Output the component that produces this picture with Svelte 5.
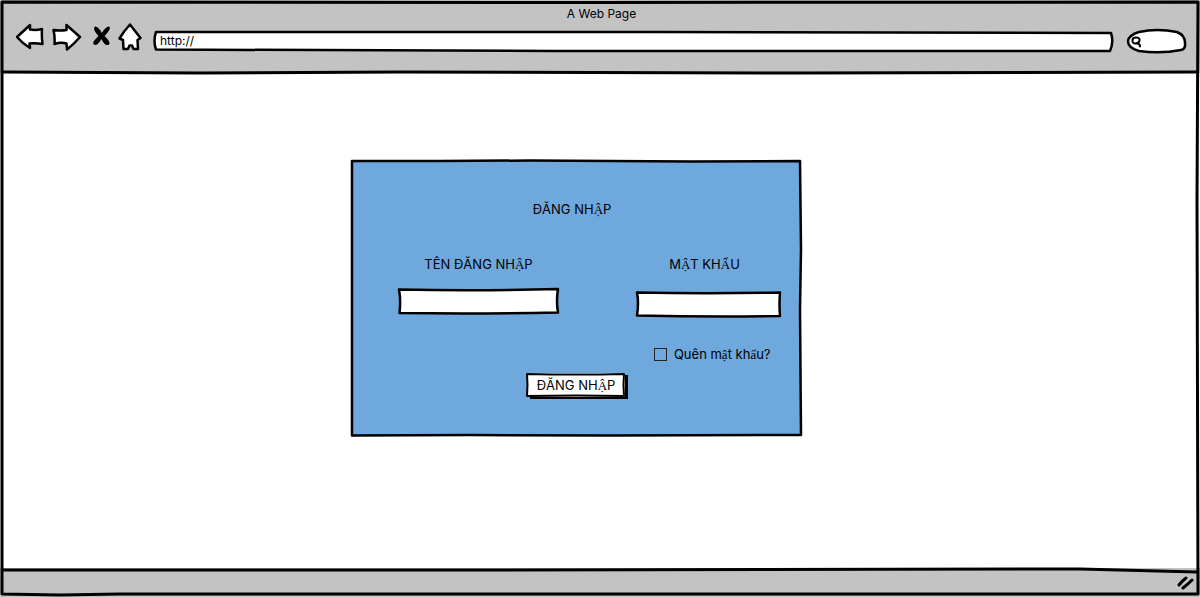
<script>
  let address = $state('http://');
  let query = $state('');
  let username = $state('');
  let password = $state('');
  let forgot = $state(false);

  // Vietnamese letters with stacked accents are set in the serif face
  const split = (text) => text.split(/([ẬậẨẩẤấ])/).filter(Boolean);
  const stacked = (part) => /^[ẬậẨẩẤấ]$/.test(part);
</script>

{#snippet outline(w, h, d, fill)}
  <svg class="outline" viewBox="0 0 {w} {h}" preserveAspectRatio="none" aria-hidden="true">
    <path {d} {fill} />
  </svg>
{/snippet}

{#snippet words(text)}{#each split(text) as part}{#if stacked(part)}<span class="serif">{part}</span>{:else}{part}{/if}{/each}{/snippet}

<div class="window">
  <header>
    <h1>A Web Page</h1>
    <div class="toolbar">
      <button class="tool back" type="button" aria-label="Back">
        <svg width="28" height="28" viewBox="0 0 28 28"><path d="M1 14 L14 2 L14 6.500 Q20 7.500 26 6 Q25.500 13 26.500 21 Q20 20 13.500 20.500 L14 25 Q7 21 1 14Z" /></svg>
      </button>
      <button class="tool forward" type="button" aria-label="Forward">
        <svg width="30" height="28" viewBox="0 0 30 28"><path d="M1.500 7 Q8 8 14.500 7 L14.500 2 L28 14 Q22 21 15 26.500 L14.500 20.500 Q9 19 2.500 21 Q3 13 1.500 7Z" /></svg>
      </button>
      <button class="tool stop" type="button" aria-label="Stop">
        <svg width="18" height="28" viewBox="0 0 18 28"><path class="solid" d="M3 3.500 Q6 3 10 10 Q13 4 17 3.500 Q20 5 12.500 13 Q19 19 17 21.500 Q13 24 9.500 16 Q6 22 3 22 Q-2 21 6.500 13 Q0 6 3 3.500Z" /></svg>
      </button>
      <button class="tool home" type="button" aria-label="Home">
        <svg width="24" height="28" viewBox="0 0 24 28"><path d="M12 1.500 L22.500 15 L19.500 17 L20 26 H15.500 L14 22.500 H11.500 L10 26 L5.500 26 L5 17 L1.500 15.500 Q6 8 12 1.500Z" /></svg>
      </button>
      <label class="address">
        {@render outline(958, 22, 'M2 2 Q200 1.500 500 2 Q700 2 956 3 Q959 12 955 21 Q700 21 400 21 L2 19.500 Q-1 11 2 2Z', '#fff')}
        <input type="text" aria-label="Address" bind:value={address} />
      </label>
      <label class="search">
        {@render outline(60, 26, 'M12 4 Q30 0 50 4 Q58 7 58 15 Q59 21 54 22 Q34 26 12 23 Q1 20 1 13 Q2 7 12 4Z', '#fff')}
        <svg class="lens" width="12" height="14" viewBox="0 0 12 14"><path d="M7 9 Q2.500 10.500 1.500 7.500 Q1 3.500 5 3.500 Q9 3.500 8.500 6.500 Q8 9 4.500 9.500 M6 9.500 Q9 9.500 9 12.500" /></svg>
        <input type="search" aria-label="Search" bind:value={query} />
      </label>
    </div>
    {@render outline(1200, 73, 'M3 72 L200 73 L400 72 L800 73 L1197 72', 'none')}
  </header>

  <main>
    <form class="login" onsubmit={(event) => event.preventDefault()}>
      {@render outline(451, 278, 'M1 1 L90 1 L180 .5 L340 1.500 L449 1 L450 90 L449 150 L450 276 L260 276.500 L120 276 L1 276.500 L1 160 L1 80Z', '#6fa8dc')}
      <h2>{@render words('ĐĂNG NHẬP')}</h2>
      <div class="fields">
        <div class="field name">
          <label for="username">{@render words('TÊN ĐĂNG NHẬP')}</label>
          <div class="box">
            {@render outline(162, 26, 'M1 1.500 Q80 3 160 1 Q158 13 160 24.500 Q80 26 1.500 25 Q3 12 1 1.500Z', '#fff')}
            <input id="username" type="text" bind:value={username} />
          </div>
        </div>
        <div class="field pass">
          <label for="password">{@render words('MẬT KHẨU')}</label>
          <div class="box">
            {@render outline(146, 26, 'M1 1.500 Q70 3 144 1.500 Q143 13 144 25 Q75 26 1 24.500 Q3 12 1 1.500Z', '#fff')}
            <input id="password" type="password" bind:value={password} />
          </div>
        </div>
      </div>
      <label class="forgot">
        <input type="checkbox" bind:checked={forgot} />
        <span>{@render words('Quên mật khẩu?')}</span>
      </label>
      <button class="submit" type="submit">
        {@render outline(98, 24, 'M0 1 Q50 2 97 1 Q96 12 97 23 Q50 22 0 23 Q1 12 0 1Z', '#fff')}
        <span>{@render words('ĐĂNG NHẬP')}</span>
      </button>
    </form>
  </main>

  <footer>
    {@render outline(1200, 29, 'M3 2 L500 2 L1080 1 L1197 4', 'none')}
    <svg class="grip" width="18" height="16" viewBox="0 0 18 16"><path d="M2 10 Q5 6 9 3 M6 13 Q10 10 15 5" /></svg>
  </footer>
  {@render outline(1200, 597, 'M2 2 L600 2.500 L1198 2 L1197 200 L1198 594 L700 594 L300 594 L120 594 L60 595 L2 594 L2 300Z', 'none')}
</div>

<style>
  :global(body) {
    margin: 0;
    background: #fff;
  }

  .window {
    position: relative;
    display: flex;
    flex-direction: column;
    min-height: 100vh;
    overflow: hidden;
    color: #000;
    font: 13px/16px Inter, "Open Sans", sans-serif;
  }

  .serif {
    font-family: "Liberation Serif", serif;
    line-height: 1;
  }

  .outline {
    position: absolute;
    inset: 0;
    width: 100%;
    height: 100%;
    overflow: visible;
    pointer-events: none;
  }

  .outline path {
    stroke: #000;
    stroke-width: 3px;
    stroke-linejoin: round;
    vector-effect: non-scaling-stroke;
  }

  h1,
  h2 {
    margin: 0;
    font-size: 13px;
    font-weight: 400;
    text-align: center;
  }

  h1 {
    font-size: 12px;
  }

  button,
  input {
    margin: 0;
    padding: 0;
    border: 0;
    background: none;
    color: inherit;
    font: inherit;
  }

  header {
    position: relative;
    padding: 6px 13px 22px 16px;
    background: #c3c3c3;
  }

  .toolbar {
    display: flex;
    align-items: center;
    height: 29px;
  }

  .tool {
    display: flex;
    flex: none;
  }

  .tool svg {
    fill: #fff;
    stroke: #000;
    stroke-width: 2.5px;
    stroke-linejoin: round;
    stroke-linecap: round;
  }

  .tool .solid {
    fill: #000;
    stroke: none;
  }

  .back {
    margin-right: 8px;
  }

  .forward {
    margin-right: 10px;
  }

  .stop {
    margin-right: 8px;
  }

  .home {
    margin-right: 12px;
  }

  .address,
  .search {
    position: relative;
    display: flex;
    align-items: center;
    margin-top: 8px;
  }

  .address {
    flex: 1;
    height: 22px;
    margin-right: 14px;
  }

  .address .outline path,
  .search .outline path,
  .box .outline path,
  .login > .outline path {
    stroke-width: 2.5px;
  }

  .address input {
    position: relative;
    width: 100%;
    padding: 0 6px;
    outline: none;
    font-size: 12px;
  }

  .search {
    width: 60px;
    height: 26px;
    padding-left: 4px;
    box-sizing: border-box;
  }

  .lens {
    position: relative;
    flex: none;
    fill: none;
    stroke: #000;
    stroke-width: 2px;
    stroke-linecap: round;
  }

  .search input {
    position: relative;
    flex: 1;
    min-width: 0;
    outline: none;
  }

  main {
    display: flex;
    flex: 1;
    align-items: flex-start;
    justify-content: center;
    padding: 87px 48px 32px 0;
  }

  .login {
    position: relative;
    display: flex;
    flex-direction: column;
    width: 451px;
    padding: 41px 0 40px;
    box-sizing: border-box;
  }

  h2,
  .fields,
  .forgot,
  .submit {
    position: relative;
  }

  h2 {
    padding-right: 8px;
    margin-bottom: 39px;
  }

  .fields {
    display: flex;
    justify-content: space-between;
    padding: 0 20px 0 47px;
  }

  .field {
    display: flex;
    flex-direction: column;
    align-items: center;
    gap: 16px;
  }

  .name {
    width: 162px;
  }

  .pass {
    width: 146px;
    gap: 19px;
  }

  .pass label {
    padding-right: 8px;
  }

  .box {
    position: relative;
    width: 100%;
    height: 26px;
  }

  .box input {
    position: relative;
    width: 100%;
    height: 100%;
    padding: 0 8px;
    box-sizing: border-box;
    outline: none;
  }

  .forgot {
    display: flex;
    align-items: center;
    align-self: flex-end;
    gap: 7px;
    padding-right: 31px;
    margin: 29px 0 11px;
  }

  .forgot input {
    width: 13px;
    height: 13px;
    border: 1px solid #222;
    appearance: none;
  }

  .forgot input:checked {
    background: #222;
  }

  .submit {
    align-self: center;
    width: 98px;
    height: 24px;
    background: #fff;
    box-shadow: 3px 2px 0 #000;
  }

  .submit .outline path {
    stroke-width: 2px;
  }

  .submit span {
    position: relative;
  }

  footer {
    position: relative;
    display: flex;
    align-items: center;
    justify-content: flex-end;
    height: 29px;
    padding-right: 5px;
    background: #c3c3c3;
  }

  .grip {
    position: relative;
    fill: none;
    stroke: #000;
    stroke-width: 3px;
    stroke-linecap: round;
  }
</style>
